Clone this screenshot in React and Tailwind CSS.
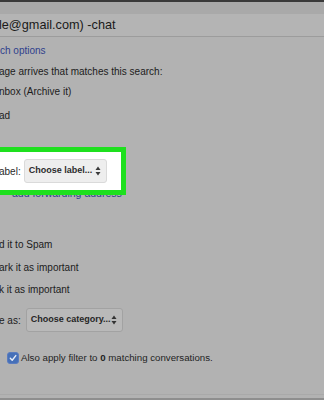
import React from "react";

function Arrows({ color = "#333" }) {
  return (
    <svg width="6" height="10" viewBox="0 0 6 10" className="shrink-0">
      <path d="M3 0.5 L5.5 4 L0.5 4 Z" fill={color} />
      <path d="M3 9.5 L5.5 6 L0.5 6 Z" fill={color} />
    </svg>
  );
}

export default function App() {
  const f = { fontFamily: '"Liberation Sans", Arial, sans-serif' };
  return (
    <div
      className="relative w-[324px] h-[400px] overflow-hidden bg-[#b2b2b2] flex flex-col text-[#1c1c1c]"
      style={f}
    >
      <div className="h-[2px] bg-[#3a3a3a] shrink-0" />
      <div className="h-[12px] bg-[#a9a9a9] shrink-0" />
      <div className="h-[23px] bg-[#b4b4b4] border-b border-[#9c9c9c] flex items-center shrink-0">
        <span className="text-[12.7px] leading-none whitespace-nowrap -ml-[1px] text-[#1a1a1a]">
          le@gmail.com) -chat
        </span>
      </div>

      <div className="mt-[6px] h-[14px] flex items-center text-[10px] text-[#2f3f8c] whitespace-nowrap">
        ch options
      </div>
      <div className="mt-[7px] h-[14px] flex items-center text-[10px] whitespace-nowrap -ml-[1px]">
        age arrives that matches this search:
      </div>
      <div className="mt-[6px] h-[14px] flex items-center text-[10px] whitespace-nowrap -ml-[1px]">
        nbox (Archive it)
      </div>
      <div className="mt-[10px] h-[14px] flex items-center text-[10px] whitespace-nowrap -ml-[1px]">
        ad
      </div>

      <div className="relative z-10 mt-[25px] w-[126px] h-[48px] bg-white border-[5px] border-l-0 border-[#1ee01e] flex items-center shrink-0">
        <span className="text-[10px] text-[#2a2a2a] whitespace-nowrap -ml-[1px]">abel:</span>
        <div className="ml-[3px] w-[83px] h-[24px] rounded-[3px] bg-[#eeeeee] border border-[#dadada] flex items-center pl-[4px] pr-[5px] justify-between">
          <span className="text-[9px] font-bold text-[#2c2c2c] whitespace-nowrap">Choose label...</span>
          <Arrows color="#3a3a3a" />
        </div>
      </div>
      <div className="-mt-[7px] h-[12px] pl-[12px] flex items-center text-[10.5px] text-[#2f3f8c] whitespace-nowrap">
        add forwarding address
      </div>

      <div className="mt-[37px] h-[14px] flex items-center text-[10px] whitespace-nowrap -ml-[1px]">
        d it to Spam
      </div>
      <div className="mt-[9px] h-[14px] flex items-center text-[10px] whitespace-nowrap -ml-[1px]">
        ark it as important
      </div>
      <div className="mt-[8px] h-[14px] flex items-center text-[10px] whitespace-nowrap -ml-[1px]">
        k it as important
      </div>

      <div className="mt-[12px] h-[24px] flex items-center shrink-0">
        <span className="text-[10px] whitespace-nowrap -ml-[1px]">e as:</span>
        <div className="ml-[5px] w-[97px] h-[24px] rounded-[3px] bg-[#b9b9b9] border border-[#a2a2a2] flex items-center pl-[4px] pr-[5px] justify-between">
          <span className="text-[9px] font-bold text-[#262626] whitespace-nowrap">Choose category...</span>
          <Arrows color="#333" />
        </div>
      </div>

      <div className="mt-[19px] h-[14px] flex items-center pl-[7px] shrink-0">
        <div className="w-[12px] h-[12px] rounded-[3px] bg-[#4670b8] border border-[#5a7cc0] flex items-center justify-center shrink-0">
          <svg width="8" height="8" viewBox="0 0 8 8">
            <path d="M1.3 4.3 L3.2 6.2 L6.8 1.6" fill="none" stroke="#e8eef8" strokeWidth="1.4" strokeLinecap="round" strokeLinejoin="round" />
          </svg>
        </div>
        <span className="ml-[2px] text-[9.7px] whitespace-nowrap text-[#232323]">
          Also apply filter to <b>0</b> matching conversations.
        </span>
      </div>

      <div className="flex-1" />
      <div className="h-[1px] bg-[#a9a9a9] shrink-0" />
      <div className="h-[3px] shrink-0" />
      <div className="h-[2px] bg-[#8e8e8e] shrink-0" />
    </div>
  );
}
